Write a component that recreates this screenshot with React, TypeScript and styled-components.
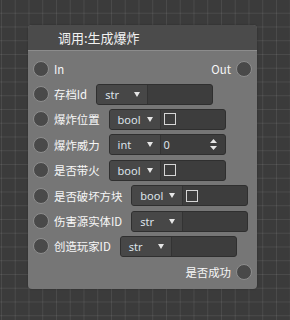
import * as React from 'react';
import styled, { createGlobalStyle } from 'styled-components';

const GlobalStyle = createGlobalStyle`
  html, body {
    margin: 0;
    padding: 0;
  }
  body {
    width: 290px;
    height: 320px;
    overflow: hidden;
    font-family: "Noto Sans CJK SC", "Noto Sans", sans-serif;
  }
`;

const Canvas = styled.div`
  width: 290px;
  height: 320px;
  box-sizing: border-box;
  padding: 25px 0 0 28px;
  background-color: #3b3b3b;
  background-image:
    linear-gradient(to right, rgba(255, 255, 255, 0.08) 1px, transparent 1px),
    linear-gradient(to bottom, rgba(255, 255, 255, 0.08) 1px, transparent 1px);
  background-size: 13.75px 13.75px;
  background-position: 1px -1px;
`;

const Node = styled.div`
  width: 229px;
  height: 264px;
  border-radius: 4px;
  overflow: hidden;
  background: #767676;
  display: flex;
  flex-direction: column;
  box-shadow: 0 0 2px rgba(0, 0, 0, 0.3);
`;

const Header = styled.div`
  height: 25px;
  flex-shrink: 0;
  background: #4b4b4b;
  border-bottom: 1px solid #8c8c8c;
  display: flex;
  align-items: center;
  padding-left: 30px;
  color: #f2f2f2;
  font-size: 13px;
`;

const Body = styled.div`
  display: flex;
  flex-direction: column;
  padding: 5px 5px 4px 5px;
`;

const Row = styled.div<{ $right?: boolean }>`
  height: 25.4px;
  display: flex;
  align-items: center;
  justify-content: ${(p) => (p.$right ? 'flex-end' : 'flex-start')};
  gap: 5px;
`;

const Port = styled.div`
  width: 14px;
  height: 14px;
  border-radius: 50%;
  background: #494949;
  border: 1.5px solid #8e8e8e;
  flex-shrink: 0;
`;

const Label = styled.span`
  color: #f6f6f6;
  font-size: 11.4px;
  white-space: nowrap;
`;

const Spacer = styled.div`
  flex: 1;
`;

const Field = styled.div`
  margin-left: 4px;
  width: 117px;
  height: 21px;
  box-sizing: border-box;
  border: 1px solid #2f2f2f;
  border-radius: 3px;
  overflow: hidden;
  display: flex;
  background: #3d3d3d;
`;

const Select = styled.div`
  width: 51px;
  flex-shrink: 0;
  box-sizing: border-box;
  background: #474747;
  border-right: 1px solid #333333;
  display: flex;
  align-items: center;
  padding: 0 7px 0 8px;
  color: #dde3ea;
  font-size: 11px;
  font-family: "Noto Sans", sans-serif;
`;

const Arrow = styled.span`
  margin-left: auto;
  width: 0;
  height: 0;
  border-left: 3.5px solid transparent;
  border-right: 3.5px solid transparent;
  border-top: 5px solid #e6e6e6;
`;

const Value = styled.div`
  flex: 1;
  display: flex;
  align-items: center;
  padding: 0 8px 0 3px;
  color: #dde3ea;
  font-size: 11px;
  font-family: "Noto Sans", sans-serif;
`;

const Check = styled.div`
  width: 10px;
  height: 10px;
  border: 1.5px solid #d6d6d6;
`;

const Spin = styled.svg`
  margin-left: auto;
`;

type Kind = 'str' | 'bool' | 'int';

const Input = ({ kind }: { kind: Kind }) => (
  <Field>
    <Select>
      {kind}
      <Arrow />
    </Select>
    <Value>
      {kind === 'bool' && <Check />}
      {kind === 'int' && (
        <>
          0
          <Spin width="7" height="11" viewBox="0 0 7 11">
            <path d="M3.5 0 L7 4 L0 4 Z M0 7 L7 7 L3.5 11 Z" fill="#e6e6e6" />
          </Spin>
        </>
      )}
    </Value>
  </Field>
);

const params: { label: string; kind: Kind }[] = [
  { label: '存档Id', kind: 'str' },
  { label: '爆炸位置', kind: 'bool' },
  { label: '爆炸威力', kind: 'int' },
  { label: '是否带火', kind: 'bool' },
  { label: '是否破坏方块', kind: 'bool' },
  { label: '伤害源实体ID', kind: 'str' },
  { label: '创造玩家ID', kind: 'str' },
];

export default function App() {
  return (
    <>
      <GlobalStyle />
      <Canvas>
        <Node>
          <Header>调用:生成爆炸</Header>
          <Body>
            <Row>
              <Port />
              <Label>In</Label>
              <Spacer />
              <Label>Out</Label>
              <Port />
            </Row>
            {params.map((p) => (
              <Row key={p.label}>
                <Port />
                <Label>{p.label}</Label>
                <Input kind={p.kind} />
              </Row>
            ))}
            <Row $right>
              <Label>是否成功</Label>
              <Port />
            </Row>
          </Body>
        </Node>
      </Canvas>
    </>
  );
}
